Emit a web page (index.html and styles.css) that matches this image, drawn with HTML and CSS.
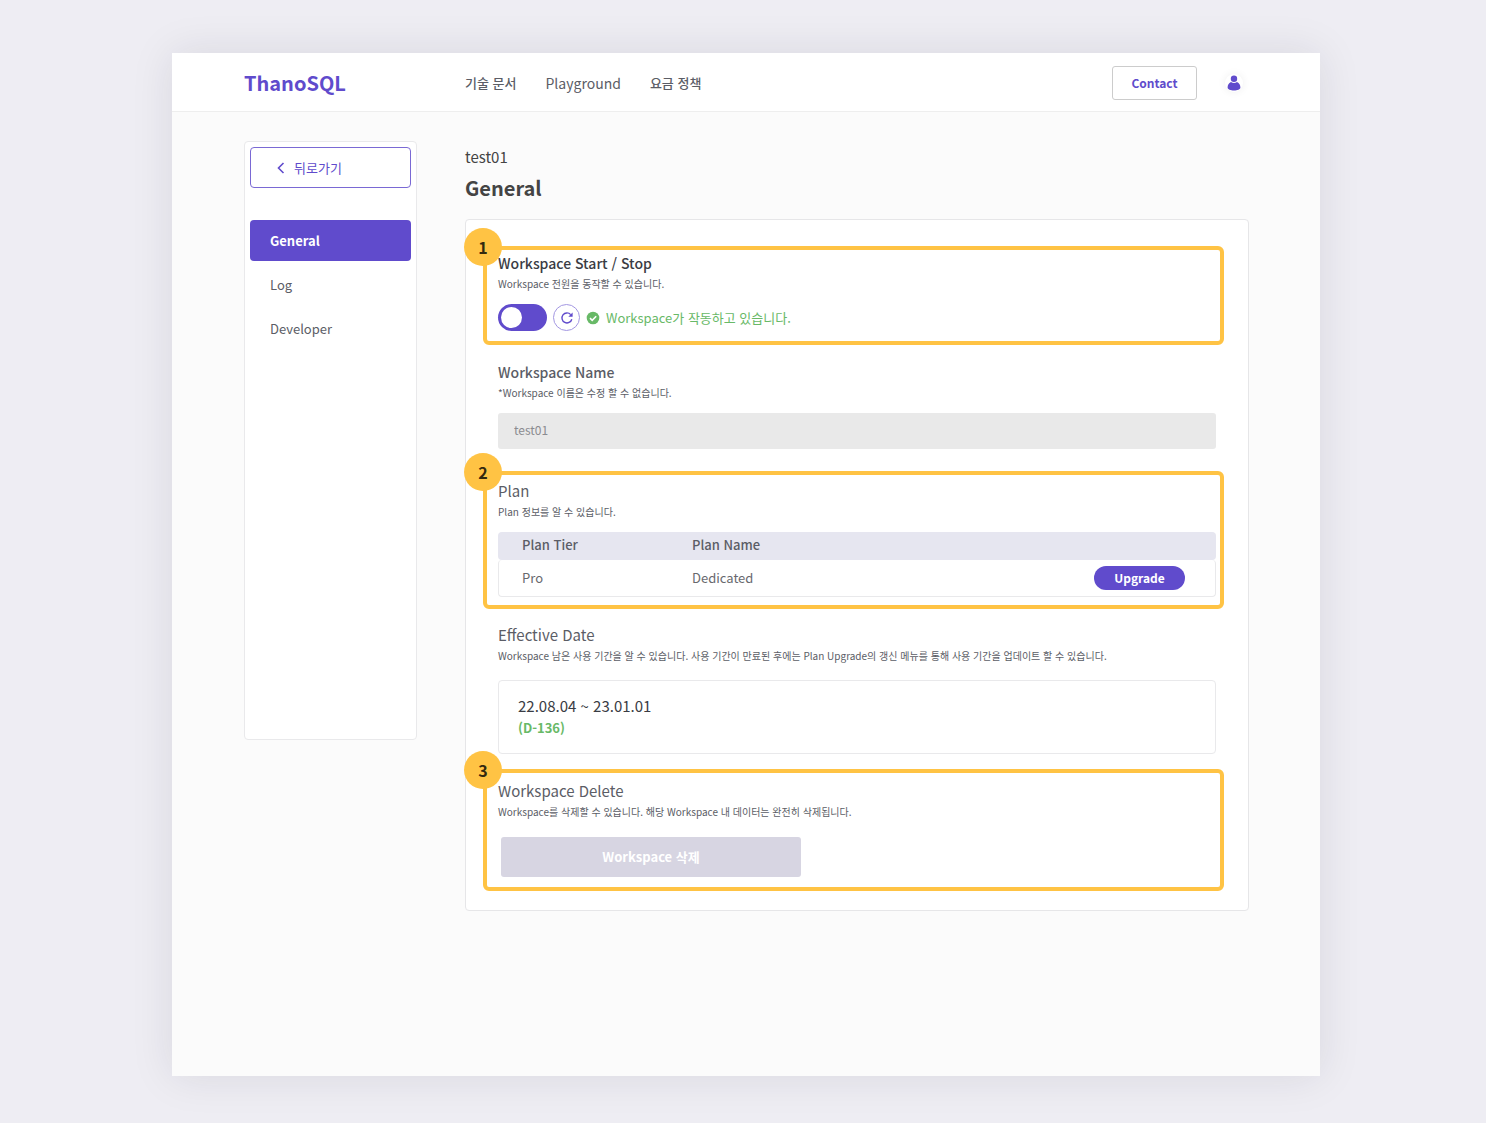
FILE: index.html
```html
<!DOCTYPE html>
<html lang="ko">
<head>
<meta charset="utf-8">
<meta name="viewport" content="width=device-width, initial-scale=1">
<title>ThanoSQL</title>
<link rel="stylesheet" href="styles.css">
</head>
<body>
<div class="window">
  <header class="topbar">
    <a class="logo" href="#">ThanoSQL</a>
    <nav class="topnav">
      <a href="#">기술 문서</a>
      <a class="latin" href="#">Playground</a>
      <a href="#">요금 정책</a>
    </nav>
    <button class="contact" type="button">Contact</button>
    <button class="avatar" type="button" aria-label="Account">
      <svg viewBox="0 0 18 18" width="18" height="18" aria-hidden="true"><circle cx="9" cy="4.800" r="3.200"/><path d="M6 8C7.700 9.300 10.300 9.300 12 8C14.300 9.200 15.400 11.200 15.400 13.400C15.400 15.500 12.400 16.400 9 16.400S2.600 15.500 2.600 13.400C2.600 11.200 3.700 9.200 6 8Z"/></svg>
    </button>
  </header>
  <div class="layout">
    <aside class="sidebar">
      <a class="back" href="#">
        <svg viewBox="0 0 8 12" width="8" height="12" aria-hidden="true"><path d="M6.500 1L1.500 6L6.500 11"/></svg>
        뒤로가기
      </a>
      <nav class="menu">
        <a class="active" href="#">General</a>
        <a href="#">Log</a>
        <a href="#">Developer</a>
      </nav>
    </aside>
    <main class="main">
      <p class="crumb">test01</p>
      <h1>General</h1>
      <div class="card">
        <section class="block marked power">
          <span class="badge">1</span>
          <h2 id="power-title">Workspace Start / Stop</h2>
          <p class="hint">Workspace 전원을 동작할 수 있습니다.</p>
          <div class="controls">
            <input class="switch" type="checkbox" role="switch" aria-labelledby="power-title">
            <button class="refresh" type="button" aria-label="Refresh">
              <svg viewBox="0 0 14 14" width="14" height="14" aria-hidden="true"><path class="arc" d="M11.800 8.200A5 5 0 1 1 10.700 3.600"/><path class="tip" d="M12.600 1.400V5.700H8.300Z"/></svg>
            </button>
            <p class="status">
              <svg viewBox="0 0 14 14" width="14" height="14" aria-hidden="true"><circle cx="7" cy="7" r="6.300"/><path d="M4 7.200L6.200 9.300L10.200 5.200"/></svg>
              Workspace가 작동하고 있습니다.
            </p>
          </div>
        </section>
        <section class="block name">
          <h2><label for="ws-name">Workspace Name</label></h2>
          <p class="hint">*Workspace 이름은 수정 할 수 없습니다.</p>
          <input class="field" id="ws-name" type="text" value="test01" disabled>
        </section>
        <section class="block marked plan">
          <span class="badge">2</span>
          <h2>Plan</h2>
          <p class="hint">Plan 정보를 알 수 있습니다.</p>
          <table class="plans">
            <thead><tr><th>Plan Tier</th><th>Plan Name</th><th></th></tr></thead>
            <tbody><tr><td>Pro</td><td>Dedicated</td><td><button class="upgrade" type="button">Upgrade</button></td></tr></tbody>
          </table>
        </section>
        <section class="block date">
          <h2>Effective Date</h2>
          <p class="hint">Workspace 남은 사용 기간을 알 수 있습니다. 사용 기간이 만료된 후에는 Plan Upgrade의 갱신 메뉴를 통해 사용 기간을 업데이트 할 수 있습니다.</p>
          <div class="period">
            <p class="range">22.08.04 ~ 23.01.01</p>
            <p class="left">(D-136)</p>
          </div>
        </section>
        <section class="block marked remove">
          <span class="badge">3</span>
          <h2>Workspace Delete</h2>
          <p class="hint">Workspace를 삭제할 수 있습니다. 해당 Workspace 내 데이터는 완전히 삭제됩니다.</p>
          <button class="delete" type="button" disabled>Workspace 삭제</button>
        </section>
      </div>
    </main>
  </div>
</div>
</body>
</html>
```

FILE: styles.css
```css
* { box-sizing: border-box; }

body {
  margin: 0;
  min-height: 100vh;
  padding: 53px 166px 47px 172px;
  display: flex;
  background: #eeedf3;
  color: #5b5d66;
  font-family: "Noto Sans CJK KR", sans-serif;
  font-size: 13px;
  line-height: 20px;
}

h1, h2, p { margin: 0; }
a { color: inherit; text-decoration: none; }
button, input { font: inherit; }
button { padding: 0; cursor: pointer; }

.window {
  flex: 1;
  min-width: 0;
  background: #fbfbfb;
  box-shadow: 0 0 40px rgba(30, 25, 45, .1);
}

.topbar {
  display: flex;
  align-items: center;
  height: 59px;
  padding: 1px 77px 0 72px;
  background: #fff;
  border-bottom: 1px solid #eee;
}
.logo {
  width: 221px;
  color: #604bcc;
  font-size: 20px;
  font-weight: 700;
}
.topnav {
  display: flex;
  flex: 1;
  gap: 29px;
  font-weight: 500;
}
.topnav .latin {
  font-size: 14px;
  font-weight: 400;
}
.contact {
  width: 85px;
  height: 34px;
  margin-right: 28px;
  background: #fff;
  border: 1px solid #ccc;
  border-radius: 3px;
  color: #604bcc;
  font-size: 12px;
  font-weight: 700;
}
.avatar {
  display: flex;
  background: #fff;
  border: 0;
  border-radius: 50%;
  box-shadow: 0 0 8px rgba(0, 0, 0, .07);
  fill: #604bcc;
}

.layout {
  display: flex;
  align-items: flex-start;
  gap: 48px;
  padding: 29px 71px 29px 72px;
}

.sidebar {
  flex: 0 0 173px;
  min-height: 599px;
  padding: 5px;
  background: #fff;
  border: 1px solid #e9e9eb;
  border-radius: 4px;
}
.back {
  display: flex;
  align-items: center;
  gap: 9px;
  height: 41px;
  margin-bottom: 32px;
  padding-left: 26px;
  border: 1px solid #7a69d4;
  border-radius: 4px;
  color: #604bcc;
}
.back svg {
  fill: none;
  stroke: #604bcc;
  stroke-width: 1.6;
}
.menu {
  display: flex;
  flex-direction: column;
  gap: 3px;
}
.menu a {
  padding: 11px 20px 10px;
  border-radius: 4px;
}
.menu .active {
  background: #604bcc;
  color: #fff;
  font-weight: 700;
}

.main {
  flex: 1;
  min-width: 0;
  padding-top: 4px;
}
.crumb {
  color: #444;
  font-size: 15px;
  line-height: 24px;
}
h1 {
  margin: 4px 0 16px;
  color: #444;
  font-size: 20px;
  line-height: 30px;
}

.card {
  padding: 26px 24px 19px 17px;
  background: #fff;
  border: 1px solid #e6e6e8;
  border-radius: 4px;
}
.block {
  position: relative;
  padding: 0 8px 0 15px;
}
.marked {
  padding: 4px 4px 10px 11px;
  border: 4px solid #ffc344;
  border-radius: 6px;
}
.power { padding-top: 1px; }
.name { margin: 15px 0 22px; }
.plan { padding-bottom: 8px; }
.date { margin: 14px 0 15px; }
.remove { padding-top: 6px; }

.badge {
  position: absolute;
  top: -22px;
  left: -23px;
  width: 38px;
  height: 38px;
  border-radius: 50%;
  background: #ffc344;
  color: #33290f;
  font-size: 16px;
  font-weight: 700;
  line-height: 38px;
  text-align: center;
}

h2 {
  font-size: 15px;
  font-weight: 400;
  line-height: 24px;
}
.power h2, .name h2 {
  font-size: 14px;
  font-weight: 500;
}
.power h2 { color: #3a3c44; }
.hint {
  margin: 1px 0 12px;
  font-size: 10px;
  line-height: 16px;
}
.date .hint { margin-bottom: 16px; }
.remove .hint { margin-bottom: 17px; }

.controls {
  display: flex;
  align-items: center;
  gap: 6px;
}
.switch {
  appearance: none;
  width: 49px;
  height: 27px;
  margin: 0;
  padding: 3px;
  border-radius: 14px;
  background: #604bcc;
  cursor: pointer;
}
.switch::before {
  content: "";
  display: block;
  width: 21px;
  height: 21px;
  border-radius: 50%;
  background: #fff;
}
.refresh {
  display: flex;
  align-items: center;
  justify-content: center;
  width: 27px;
  height: 27px;
  background: #fff;
  border: 1px solid #a397e2;
  border-radius: 50%;
}
.refresh .arc {
  fill: none;
  stroke: #604bcc;
  stroke-width: 1.4;
}
.refresh .tip { fill: #604bcc; }
.status {
  display: flex;
  align-items: center;
  gap: 6px;
  color: #68b967;
}
.status circle { fill: #68b967; }
.status path {
  fill: none;
  stroke: #fff;
  stroke-width: 1.6;
}

.field {
  display: block;
  width: 100%;
  height: 36px;
  padding: 0 16px 4px;
  background: #e9e9e9;
  border: 0;
  border-radius: 3px;
  color: #8b8b90;
  font-size: 12px;
}

.plans {
  width: 100%;
  border-spacing: 0;
  table-layout: fixed;
  text-align: left;
}
.plans th, .plans td { padding: 0 0 0 24px; }
.plans th {
  height: 28px;
  padding-bottom: 2px;
  background: #e6e6f0;
  font-weight: 500;
}
.plans td {
  height: 37px;
  border-bottom: 1px solid #e9e9eb;
  color: #68696e;
}
.plans th:first-child { width: 170px; border-radius: 4px 0 0 4px; }
.plans th:last-child { border-radius: 0 4px 4px 0; }
.plans td:first-child {
  padding-left: 23px;
  border-left: 1px solid #e9e9eb;
  border-radius: 4px 0 0 4px;
}
.plans td:last-child {
  padding-right: 30px;
  border-right: 1px solid #e9e9eb;
  border-radius: 0 4px 4px 0;
  text-align: right;
}
.upgrade {
  display: inline-block;
  width: 91px;
  height: 24px;
  background: #604bcc;
  border: 0;
  border-radius: 12px;
  color: #fff;
  font-size: 12px;
  font-weight: 700;
}

.period {
  padding: 13px 19px 15px;
  border: 1px solid #e9e9eb;
  border-radius: 4px;
}
.range {
  color: #3a3c44;
  font-size: 15px;
  line-height: 24px;
}
.left {
  color: #68b967;
  font-weight: 700;
}

.delete {
  display: block;
  width: 300px;
  max-width: 100%;
  height: 40px;
  margin-left: 3px;
  background: #d7d5e2;
  border: 0;
  border-radius: 3px;
  color: #fff;
  font-weight: 700;
}
```
